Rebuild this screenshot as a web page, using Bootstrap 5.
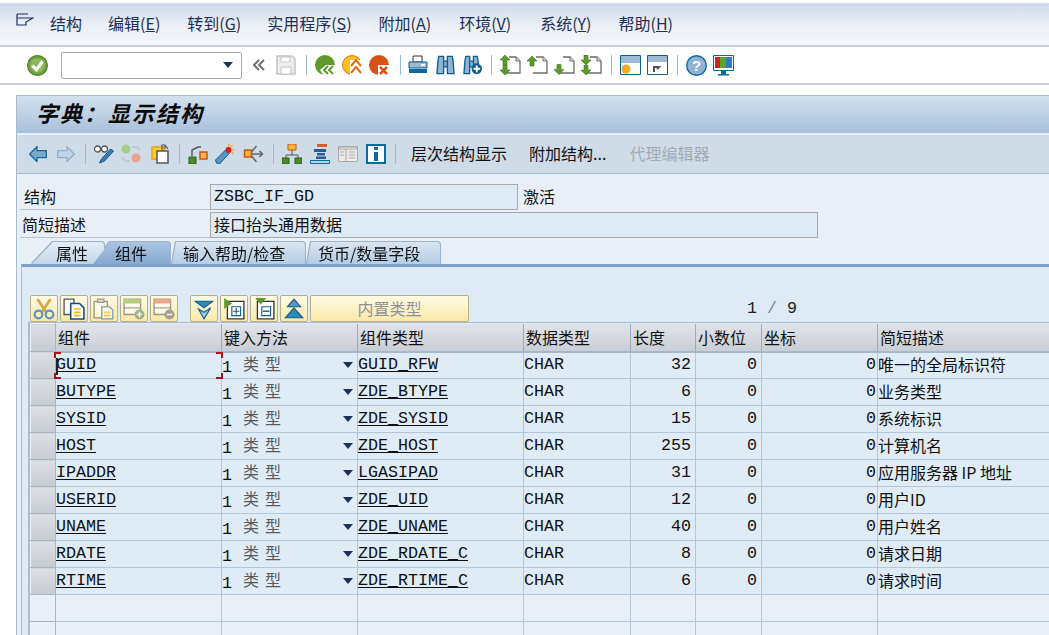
<!doctype html>
<html lang="zh"><head><meta charset="utf-8"><title>字典：显示结构</title>
<link href="https://cdn.jsdelivr.net/npm/bootstrap@5.3.0/dist/css/bootstrap.min.css" rel="stylesheet">
<style>
html,body{height:635px;overflow:hidden;background:#fff}
body{font:16px/1.2 "Noto Sans CJK SC",sans-serif;color:#111}
.menu-bar{height:44px;margin-top:3px;background:linear-gradient(#cfd9e8,#ecf0f6 55%,#f2f5f9);border-bottom:2px solid #c9ced6;color:#1c2f55;padding-left:16px}
.menu-bar span{white-space:nowrap}
.menu-ic{margin-right:16px;margin-top:-8px}
.sys-bar{height:38px;border-bottom:2px solid #c9ced6;background:#fff;padding-left:27px}
.cmd{width:181px;height:27px;border:1px solid #aaa;border-radius:2px;background:#fff}
.tri{width:0;height:0;border:5px solid transparent;border-top:6px solid #1d2f5f;border-bottom:0;flex:none}
.ic{display:block;flex:none}
.sep{width:1px;height:20px;background:#9db8d2;flex:none}
.m5{margin-right:5px}.m6{margin-right:6px}.m7{margin-right:7px}.m8{margin-right:8px}.m9{margin-right:9px}.m10{margin-right:10px}.m11{margin-right:11px}.m12{margin-right:12px}.m13{margin-right:13px}.m15{margin-right:15px}.m22{margin-right:22px}.m23{margin-right:23px}
.m26{margin-right:26px}.m27{margin-right:27px}.m28{margin-right:28px}.m29{margin-right:29px}
.win{margin:10px 0 0 16px;border-top:1px solid #a9bbcf;border-left:1px solid #a9bbcf;height:540px;background:#e8eff7;overflow:hidden}
.ttl{height:37px;background:linear-gradient(#d2e0ee,#a9c0da);font:italic 700 22px/33px "Noto Sans CJK SC",sans-serif;padding-left:19px;letter-spacing:2px;color:#0c0c0c}
.app{height:41px;background:#cfdce8;border-top:2px solid #e7eef5;border-bottom:1px solid #a7b8c9;padding-left:12px}
.app .t{white-space:nowrap}
.dis{color:#a4aab0}
.gap10{height:10px}
.fld-row{height:28px;margin-left:3px}
.lbl{width:190px;height:26px;line-height:24px;flex:none;border-bottom:1px solid #bcc2c8}
.l3{padding-left:4px}.l1{padding-left:2px}
.box{height:26px;background:#deeaf4;border:1px solid #a8a8a8;line-height:23px;padding-left:3px;flex:none}
.w308{width:308px}.w608{width:608px}
.stat{margin-left:5px;line-height:25px}
.mono,.mono td{font-family:"Liberation Mono","Noto Sans CJK SC",monospace;font-size:16.67px}
.tabs{height:22px;margin:2px 0 0 15px;filter:drop-shadow(-1px 0 0 #9fb3c8) drop-shadow(0 -1px 0 #9fb3c8)}
.tb{height:22px;background:linear-gradient(#e4edf5,#c2d6e8);border-right:1px solid #9fb3c8;border-radius:0 4px 0 0;line-height:22px;white-space:nowrap;flex:none}
.t1{width:73px;padding-left:24px;clip-path:polygon(21px 0,100% 0,100% 100%,0 100%)}
.t2{width:78px;margin-left:-12px;padding-left:22px;background:linear-gradient(#a9c5e2,#86a9d1);clip-path:polygon(17px 0,100% 0,100% 100%,0 100%);position:relative}
.t3,.t4{width:134px;margin-left:1px;padding-left:11px;background:linear-gradient(#d8e5f1,#b4cde4);clip-path:polygon(4px 0,100% 0,100% 100%,0 100%)}
.strip{margin-left:4px;height:372px;border-left:1px solid #a3bad1;border-top:3px solid #7fa0c6;background:#deeaf5;overflow:hidden}
.tool{height:27px;margin:28px 0 0 8px}
.bt{width:28px;height:27px;background:linear-gradient(#fffbe5,#f9e9a8);border:1px solid #b9b08a;border-radius:2px;margin-right:2px;flex:none;display:flex;align-items:center;justify-content:center}
.bt.lab{width:159px;color:#8d9299}
.spc{width:10px;flex:none}
.cnt{width:50px;margin-left:276px;line-height:20px;margin-top:4px;color:#222;font-family:"Liberation Mono",monospace;font-size:16.67px;white-space:pre;flex:none}
.cnt i{font-style:normal;color:#6a8aa8}
.grid{table-layout:fixed;width:1040px;border-collapse:collapse;margin:1px 0 0 8px;box-shadow:-2px -1px 0 #a9bcd0}
.c0{width:25px}.c1{width:166px}.c2{width:136px}.c3{width:166px}.c4{width:107px}.c5{width:65px}.c6{width:66px}.c7{width:116px}
.grid th{height:28px;font-weight:400;font-family:"Noto Sans CJK SC",sans-serif;font-size:16px;line-height:24px;background:linear-gradient(#e0e3e8,#c9ced6);border-left:1px solid #f0f2f5;border-right:1px solid #9eaab8;border-bottom:2px solid #a9b8c8;padding:0 2px;white-space:nowrap;overflow:hidden}
.grid td{height:27px;border:1px solid #b4c7d9;padding:0;background:#dfebf5;white-space:nowrap;overflow:hidden;line-height:22px;vertical-align:middle}
.grid tr.empty td{background:#e8eff7}
.grid td.sel,.grid th.sel{background:linear-gradient(#dcdfe4,#c6cbd2);border:1px solid #eef1f4;border-right-color:#aab5c2;border-bottom-color:#aab5c2}
.grid .num{text-align:right;padding-right:4px}
.grid .n0{padding-right:1px}
.grid u{text-underline-offset:2px;text-decoration-thickness:1px}
.grid td.cjk{font:16px/22px "Noto Sans CJK SC",sans-serif;padding:0 0 3px}
.ty{display:flex;align-items:center;justify-content:space-between;padding-right:4px;height:22px}
.ty b{font-weight:400;color:#5a5a5a;font-family:"Noto Sans CJK SC",sans-serif;font-size:16px;margin-left:11px;letter-spacing:6px;line-height:22px;vertical-align:2px}
.ty em{font-style:normal;flex:1;line-height:22px}
.grid td.focus{position:relative;overflow:visible}
.cn{position:absolute;width:7px;height:6px;border:0 solid #a11;z-index:2}
.tl{left:-2px;top:-1px;border-width:2px 0 0 2px}.tr{right:-2px;top:-1px;border-width:2px 2px 0 0}
.bl{left:-2px;bottom:-1px;border-width:0 0 2px 2px}.br{right:-2px;bottom:-1px;border-width:0 2px 2px 0}
.caret{position:absolute;left:0;top:5px;height:17px;width:1.500px;background:#222}
</style></head><body>
<svg width="0" height="0" class="position-absolute"><defs>
<symbol id="pg" viewBox="0 0 16 18"><path d="M4 1h7l4 4v12H1" fill="#fff" stroke="#6b6b6b" stroke-width="1.300"/><path d="M11 1v4h4" fill="#ddd" stroke="#6b6b6b"/></symbol>
<symbol id="up" viewBox="0 0 10 10"><path d="M5 0l5 5H7v5H3V5H0z" fill="#5d9a2c" stroke="#3c7519" stroke-width=".6"/></symbol>
<symbol id="dn" viewBox="0 0 10 10"><path d="M5 10L0 5h3V0h4v5h3z" fill="#5d9a2c" stroke="#3c7519" stroke-width=".6"/></symbol>
</defs></svg>

<nav class="menu-bar d-flex align-items-center">
<svg class="ic menu-ic" width="18" height="14" viewBox="0 0 18 14"><path d="M1 1v11h9V9l7-4H1M1 1h11" fill="none" stroke="#1d2f5f" stroke-width="1.200"/></svg>
<span class="m26">结构</span><span class="m27">编辑(<u>E</u>)</span><span class="m26">转到(<u>G</u>)</span><span class="m27">实用程序(<u>S</u>)</span><span class="m28">附加(<u>A</u>)</span><span class="m29">环境(<u>V</u>)</span><span class="m27">系统(<u>Y</u>)</span><span>帮助(<u>H</u>)</span>
</nav>

<div class="sys-bar d-flex align-items-center">
<svg class="ic m13" width="21" height="21" viewBox="0 0 20 20"><circle cx="10" cy="10" r="9.500" fill="#6d9e3a" stroke="#4c7a2a"/><circle cx="10" cy="10" r="7" fill="#8ab85a"/><path d="M5 10l4 4 6-8" fill="none" stroke="#fff" stroke-width="3"/></svg>
<div class="cmd d-flex align-items-center justify-content-end pe-2 m11"><i class="tri"></i></div>
<svg class="ic m11" width="12" height="12" viewBox="0 0 12 12"><path d="M6 1L1 6l5 5M11 1L6 6l5 5" fill="none" stroke="#707070" stroke-width="2"/></svg>
<svg class="ic m10" width="20" height="20" viewBox="0 0 20 20"><path d="M1 1h15l3 3v15H1z" fill="#eee" stroke="#c4c4c4" stroke-width="1.500"/><path d="M5 2h9v5H5zM5 12h10v7H5z" fill="#fff" stroke="#c4c4c4"/></svg>
<i class="sep m8"></i>
<svg class="ic m7" width="20" height="21" viewBox="0 0 20 21"><circle cx="10" cy="10" r="10" fill="#5f9a2f"/><path d="M5 15l6-5h9v11H9z" fill="#fff"/><path d="M13 11l-4 4 4 4M18 11l-4 4 4 4" fill="none" stroke="#5f9a2f" stroke-width="2"/></svg>
<svg class="ic m7" width="20" height="21" viewBox="0 0 20 21"><circle cx="10" cy="10" r="9.500" fill="#ffc21c" stroke="#e46a12"/><path d="M8 5h12v16H8z" fill="#fff"/><path d="M9 11l5-6 5 6M9 18l5-6 5 6" fill="none" stroke="#e46a12" stroke-width="2"/></svg>
<svg class="ic m11" width="20" height="21" viewBox="0 0 20 21"><circle cx="10" cy="10" r="10" fill="#d55314"/><path d="M9 10h11v11H9z" fill="#fff"/><path d="M11 12l7 7M18 12l-7 7" stroke="#d55314" stroke-width="2.500"/></svg>
<i class="sep m7"></i>
<svg class="ic m8" width="20" height="20" viewBox="0 0 20 20"><path d="M5 1h9v6H5z" fill="#fff" stroke="#333"/><path d="M1 7h18v6H1z" fill="#9dbad6" stroke="#0e5d8c"/><path d="M1 14h18v4H1z" fill="#0e6a9c"/><path d="M13 9h4v2h-4z" fill="#fff"/></svg>
<svg class="ic m8" width="19" height="20" viewBox="0 0 20 20"><path d="M2 6l1-5h5v18H1zM18 6l-1-5h-5v18h7zM8 6h4v6H8z" fill="#8fb3d3" stroke="#0e5d8c" stroke-width="1.400"/></svg>
<svg class="ic m9" width="19" height="20" viewBox="0 0 20 20"><path d="M2 6l1-5h4v18H1zM16 6l-1-5h-4v8h5zM7 6h4v6H7z" fill="#8fb3d3" stroke="#0e5d8c" stroke-width="1.400"/><circle cx="14.500" cy="14" r="5.500" fill="#0e5d8c"/><path d="M14.500 10.500v7M11 14h7" stroke="#fff" stroke-width="2"/></svg>
<i class="sep m8"></i>
<svg class="ic m6" width="21" height="20"><use href="#pg" x="5" width="16" height="20"/><use href="#up" width="10" height="10"/><use href="#dn" y="10" width="10" height="10"/></svg>
<svg class="ic m6" width="21" height="20"><use href="#pg" x="5" width="16" height="20"/><use href="#up" width="10" height="12"/></svg>
<svg class="ic m6" width="21" height="20"><use href="#pg" x="5" width="16" height="20"/><use href="#dn" y="9" width="10" height="11"/></svg>
<svg class="ic m9" width="21" height="20"><use href="#pg" x="5" width="16" height="20"/><use href="#dn" width="10" height="10"/><use href="#dn" y="10" width="10" height="10"/></svg>
<i class="sep m8"></i>
<svg class="ic m6" width="21" height="20" viewBox="0 0 21 20"><path d="M.500.500h20v19H.500z" fill="#fff" stroke="#0e5d8c"/><path d="M1 1h19v7H1z" fill="#9dbad6"/><circle cx="6" cy="14" r="4.500" fill="#f7a823"/></svg>
<svg class="ic m9" width="21" height="20" viewBox="0 0 21 20"><path d="M.500.500h20v19H.500z" fill="#fff" stroke="#0e5d8c"/><path d="M1 1h19v6H1z" fill="#9dbad6"/><path d="M7 17v-5h5l-2 2" fill="none" stroke="#555" stroke-width="2"/></svg>
<i class="sep m8"></i>
<svg class="ic m6" width="21" height="21" viewBox="0 0 21 21"><circle cx="10.500" cy="10.500" r="9.800" fill="#8fb3d3" stroke="#0e6a9c" stroke-width="1.400"/><text x="10.500" y="16" text-anchor="middle" font-family="Liberation Sans" font-weight="700" font-size="15" fill="#fff">?</text></svg>
<svg class="ic" width="21" height="21" viewBox="0 0 21 21"><path d="M.500.500h20v15H.500z" fill="#fff" stroke="#0e6a9c"/><path d="M2 2h5v11H2z" fill="#d81e1e"/><path d="M7 2h6v11H7z" fill="#5aa52a"/><path d="M13 2h6v11h-6z" fill="#2a7ec4"/><path d="M8 16h5v3h3v1.500H5V19h3z" fill="#0e6a9c"/></svg>
</div>

<main class="win">
<div class="ttl">字典：显示结构</div>
<div class="app d-flex align-items-center">
<svg class="ic m10" width="18" height="16" viewBox="0 0 18 16"><path d="M8 .7v4h9.300v7H8v4L.7 8z" fill="#7fa9cc" stroke="#0e6a9c" stroke-width="1.300"/></svg>
<svg class="ic m10" width="18" height="16" viewBox="0 0 18 16"><path d="M10 .7v4H.7v7H10v4L17.300 8z" fill="#c3d5e5" stroke="#8db0cd" stroke-width="1.300"/></svg>
<i class="sep m7"></i>
<svg class="ic m7" width="21" height="20" viewBox="0 0 20 20"><circle cx="4" cy="5" r="3" fill="#fff" stroke="#555" stroke-width="1.300"/><circle cx="11" cy="5" r="3" fill="#fff" stroke="#555" stroke-width="1.300"/><path d="M6 19l2-4 9-10 3 2-9 10z" fill="#3f7cb3" stroke="#0e5d8c"/></svg>
<svg class="ic m10" width="20" height="20" viewBox="0 0 20 20"><circle cx="5" cy="5" r="4.500" fill="#a9cc8f"/><circle cx="15" cy="14" r="4.500" fill="#e5a48c"/><path d="M11 3h5l3 3M9 17H4l-3-4" fill="none" stroke="#c4c9cc" stroke-width="2"/></svg>
<svg class="ic m8" width="20" height="20" viewBox="0 0 20 20"><path d="M1 3h12v12H1z" fill="#ffd21f" stroke="#f29a1b" stroke-width="1.500"/><path d="M6 7h11v12H6z" fill="#fff" stroke="#555" stroke-width="1.500"/><path d="M11 6V1h3v4M14 1l3 4" fill="none" stroke="#555" stroke-width="1.200"/></svg>
<i class="sep m8"></i>
<svg class="ic m7" width="20" height="20" viewBox="0 0 20 20"><path d="M1 13h7v7H1z" fill="#4e8a2c" stroke="#2b5f14"/><path d="M12 8h7v7h-7z" fill="#f7b53a" stroke="#c9551a" stroke-width="1.500"/><path d="M4 12V6l6-3h3" fill="none" stroke="#555" stroke-width="1.400"/></svg>
<svg class="ic m7" width="21" height="20" viewBox="0 0 20 20"><path d="M1 19l-1-3L10 6l4 3L4 20z" fill="#5d93c4" stroke="#0e5d8c"/><circle cx="13" cy="6" r="3" fill="#d31e1e"/><path d="M13 0v2M19 6h-3M17 1l-2 2M18 10l-2-2" stroke="#f7a823" stroke-width="1.300"/></svg>
<svg class="ic m9" width="21" height="20" viewBox="0 0 20 20"><path d="M1 6h7v7H1z" fill="#f7b53a" stroke="#c9551a" stroke-width="1.500"/><path d="M8 10h11M16 7l3 3-3 3M8 8l5-6M8 12l5 6" fill="none" stroke="#666" stroke-width="1.500"/></svg>
<i class="sep m8"></i>
<svg class="ic m8" width="20" height="20" viewBox="0 0 20 20"><path d="M6 0h8v6H6z" fill="#f7b53a" stroke="#c9551a"/><path d="M10 6v5M4 14v-3h12v3" fill="none" stroke="#555"/><path d="M0 14h7v6H0zM13 14h7v6h-7z" fill="#4e8a2c" stroke="#2b5f14"/></svg>
<svg class="ic m8" width="20" height="20" viewBox="0 0 20 20"><path d="M7 0h10v3H7z" fill="#d9602c"/><path d="M4 5h12v3H4z" fill="#2c5a9c"/><path d="M7 9h8v2.500H7zM6 12.500h10V15H6z" fill="#2c5a9c"/><path d="M.500 16.500h19v3H.500z" fill="#bcd3e6" stroke="#0e6a9c"/></svg>
<svg class="ic m8" width="20" height="16" viewBox="0 0 20 16"><path d="M.500.500h19v15H.500z" fill="#e9e9e9" stroke="#a8a8a8"/><path d="M1 1h18v2H1zM8 3v12M11 6h6M11 9h6M11 12h6M2 6h4M2 9h4" fill="none" stroke="#aaa"/></svg>
<svg class="ic m9" width="20" height="20" viewBox="0 0 20 20"><path d="M1 1h18v18H1z" fill="#fff" stroke="#0e6a9c" stroke-width="2"/><path d="M8 3h4v3H8zM8 8h4v9H8z" fill="#0e6a9c"/></svg>
<i class="sep m15"></i>
<span class="t m22">层次结构显示</span><span class="t m23">附加结构...</span><span class="t dis">代理编辑器</span>
</div>

<div class="gap10"></div>
<div class="fld-row d-flex"><span class="lbl l3">结构</span><div class="box mono w308">ZSBC_IF_GD</div><span class="stat">激活</span></div>
<div class="fld-row d-flex"><span class="lbl l1">简短描述</span><div class="box w608">接口抬头通用数据</div></div>
<div class="tabs d-flex"><div class="tb t1">属性</div><div class="tb t2">组件</div><div class="tb t3">输入帮助/检查</div><div class="tb t4">货币/数量字段</div></div>
<div class="strip">
<div class="tool d-flex">
<span class="bt"><svg width="22" height="22" viewBox="0 0 20 20"><path d="M4 1l8 12M16 1L8 13" stroke="#d6a84a" stroke-width="2.500"/><circle cx="5" cy="15" r="3.500" fill="none" stroke="#5d93c4" stroke-width="2"/><circle cx="15" cy="15" r="3.500" fill="none" stroke="#5d93c4" stroke-width="2"/></svg></span>
<span class="bt"><svg width="22" height="22" viewBox="0 0 20 20"><path d="M1 1h9v14H1z" fill="#fff" stroke="#555" stroke-width="1.200"/><path d="M7 5h8l4 4v10H7z" fill="#fff" stroke="#124a7a" stroke-width="1.400"/><path d="M10 10h6M10 13h6M10 16h6" stroke="#f4b41a" stroke-width="1.500"/></svg></span>
<span class="bt"><svg width="22" height="22" viewBox="0 0 20 20" opacity=".6"><path d="M1 3h12v15H1z" fill="#fff" stroke="#555" stroke-width="1.200"/><path d="M4 1h6v3H4z" fill="#ccc" stroke="#555"/><path d="M8 8h7l3 3v8H8z" fill="#fff" stroke="#2a6a9c" stroke-width="1.200"/><path d="M10 13h6M10 16h6" stroke="#f4b41a" stroke-width="1.500"/></svg></span>
<span class="bt"><svg width="22" height="22" viewBox="0 0 20 20" opacity=".65"><path d="M1 1h15v14H1z" fill="#fff" stroke="#666" stroke-width="1.200"/><path d="M1 1h15v4H1z" fill="#8fb84f"/><path d="M1 9h15" stroke="#666"/><circle cx="15" cy="15" r="4.500" fill="#6d9070"/><path d="M15 12.500v5M12.500 15h5" stroke="#fff" stroke-width="1.500"/></svg></span>
<span class="bt"><svg width="22" height="22" viewBox="0 0 20 20" opacity=".65"><path d="M1 1h15v14H1z" fill="#fff" stroke="#666" stroke-width="1.200"/><path d="M1 1h15v4H1z" fill="#e0805a"/><path d="M1 9h15" stroke="#666"/><circle cx="15" cy="15" r="4.500" fill="#777"/><path d="M12.500 15h5" stroke="#fff" stroke-width="1.500"/></svg></span>
<span class="spc"></span>
<span class="bt"><svg width="22" height="22" viewBox="0 0 20 20"><path d="M2 3h16l-8 6z" fill="#2d8ab5" stroke="#0e5d8c"/><path d="M5 10l5 3 6-4-6 10z" fill="#a9c9de" stroke="#0e5d8c"/></svg></span>
<span class="bt"><svg width="22" height="22" viewBox="0 0 20 20"><path d="M4 3h15v16H4z" fill="#fff" stroke="#333" stroke-width="1.200"/><path d="M1 0l7 5-7 5z" fill="#5d9a2c"/><path d="M8 8h8v8H8z" fill="none" stroke="#0e5d8c"/><path d="M12 9v6M9 12h6" stroke="#0e5d8c"/></svg></span>
<span class="bt"><svg width="22" height="22" viewBox="0 0 20 20"><path d="M4 3h15v16H4z" fill="#fff" stroke="#333" stroke-width="1.200"/><path d="M2 0h10L7 6z" fill="#5d9a2c"/><path d="M8 8h8v8H8z" fill="none" stroke="#0e5d8c"/><path d="M9 12h6" stroke="#0e5d8c" stroke-width="1.300"/></svg></span>
<span class="bt"><svg width="22" height="22" viewBox="0 0 20 20"><path d="M10 1l6 7H4z" fill="#5b95bc" stroke="#0e5d8c"/><path d="M2 18l8-9 8 9z" fill="#2d8ab5" stroke="#0e5d8c"/></svg></span>
<span class="bt lab">内置类型</span>
<span class="cnt">1 <i>/</i> 9</span>
</div>
<table class="grid mono">
<colgroup><col class="c0"><col class="c1"><col class="c2"><col class="c3"><col class="c4"><col class="c5"><col class="c6"><col class="c7"><col></colgroup>
<thead><tr><th class="sel"></th><th>组件</th><th>键入方法</th><th>组件类型</th><th>数据类型</th><th>长度</th><th>小数位</th><th>坐标</th><th>简短描述</th></tr></thead>
<tbody id="rows"></tbody>
</table>
</div>
</main>
<script>
const d=[["GUID","GUID_RFW",32,"唯一的全局标识符"],["BUTYPE","ZDE_BTYPE",6,"业务类型"],["SYSID","ZDE_SYSID",15,"系统标识"],["HOST","ZDE_HOST",255,"计算机名"],["IPADDR","LGASIPAD",31,"应用服务器 IP 地址"],["USERID","ZDE_UID",12,"用户ID"],["UNAME","ZDE_UNAME",40,"用户姓名"],["RDATE","ZDE_RDATE_C",8,"请求日期"],["RTIME","ZDE_RTIME_C",6,"请求时间"]];
let h="";
d.forEach((r,i)=>{const f=i==0;h+=`<tr><td class="sel"></td><td class="${f?'focus':''}">${f?'<i class="cn tl"></i><i class="cn tr"></i><i class="cn bl"></i><i class="cn br"></i><i class="caret"></i>':''}<u>${r[0]}</u></td><td><div class="ty"><em>1<b>类型</b></em><i class="tri"></i></div></td><td><u>${r[1]}</u></td><td>CHAR</td><td class="num">${r[2]}</td><td class="num">0</td><td class="num n0">0</td><td class="cjk">${r[3]}</td></tr>`});
for(let i=0;i<2;i++)h+=`<tr class="empty"><td class="sel"></td><td></td><td></td><td></td><td></td><td></td><td></td><td></td><td></td></tr>`;
document.getElementById("rows").innerHTML=h;
</script>
</body></html>
